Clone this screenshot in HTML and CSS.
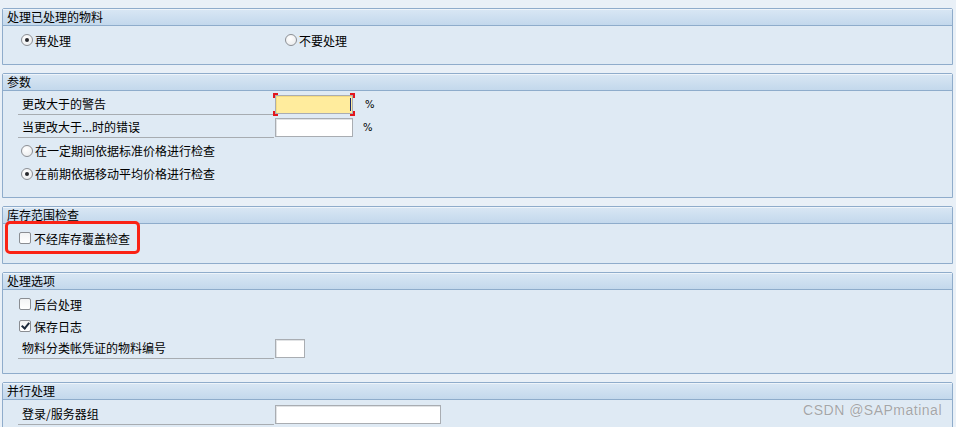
FILE: index.html
```html
<!DOCTYPE html>
<html>
  <head>
    <meta charset="utf-8">
    <title>处理选项</title>
    <link rel="stylesheet" href="styles.css">
  </head>
  <body>
    <div class="group">
      <div class="group_title">处理已处理的物料</div>
      <div class="group_body first">
        <div class="row">
          <label class="choice wide"><span class="radio on"></span>再处理</label>
          <label class="choice"><span class="radio"></span>不要处理</label>
        </div>
      </div>
    </div>

    <div class="group">
      <div class="group_title">参数</div>
      <div class="group_body tall">
        <div class="row">
          <span class="field_label">更改大于的警告</span>
          <span class="focus_mark">
            <span class="input focused"><span class="caret"></span></span>
          </span>
          <span class="unit">%</span>
        </div>
        <div class="row">
          <span class="field_label">当更改大于...时的错误</span>
          <span class="input"></span>
          <span class="unit">%</span>
        </div>
        <div class="row">
          <label class="choice"><span class="radio"></span>在一定期间依据标准价格进行检查</label>
        </div>
        <div class="row">
          <label class="choice"><span class="radio on"></span>在前期依据移动平均价格进行检查</label>
        </div>
      </div>
    </div>

    <div class="group">
      <div class="group_title">库存范围检查</div>
      <div class="group_body">
        <div class="row">
          <label class="choice box"><span class="check"></span>不经库存覆盖检查</label>
        </div>
      </div>
      <div class="highlight"></div>
    </div>

    <div class="group">
      <div class="group_title">处理选项</div>
      <div class="group_body">
        <div class="row">
          <label class="choice box"><span class="check"></span>后台处理</label>
        </div>
        <div class="row">
          <label class="choice box"><span class="check on"></span>保存日志</label>
        </div>
        <div class="row">
          <span class="field_label">物料分类帐凭证的物料编号</span>
          <span class="input short"></span>
        </div>
      </div>
    </div>

    <div class="group">
      <div class="group_title">并行处理</div>
      <div class="group_body">
        <div class="row">
          <span class="field_label">登录/服务器组</span>
          <span class="input long"></span>
        </div>
        <div class="row">
          <span class="field_label blank"></span>
          <span class="input tiny"></span>
        </div>
      </div>
    </div>

    <div class="watermark">CSDN @SAPmatinal</div>
  </body>
</html>
```

FILE: styles.css
```css
html, body {
  height: 100%;
  overflow: hidden;
}

body {
  margin: 0;
  padding: 8px 3px 0 2px;
  background: #e9f0f7;
  font-family: "Noto Sans CJK SC", "DejaVu Sans", sans-serif;
  font-size: 12px;
  color: #000;
  position: relative;
}

.group {
  position: relative;
  border: 1px solid #8faccb;
  border-radius: 2px 2px 0 0;
  background: #dfeaf4;
  margin-bottom: 8px;
}

.group_title {
  height: 16px;
  line-height: 16px;
  padding-left: 4px;
  background: linear-gradient(#d9e7f4, #c3d8ec);
  border-bottom: 1px solid #8eaccb;
  box-shadow: inset 0 1px 0 #eef4fa;
}

.group_body {
  padding: 3px 0 14px 0;
}

.group_body.first {
  padding-bottom: 13px;
}

.group_body.tall {
  padding: 2px 0 12px 0;
}

.tall .row {
  height: 23px;
}

.row {
  display: flex;
  align-items: center;
  height: 22px;
  padding-left: 15px;
}

.choice {
  display: flex;
  align-items: center;
  gap: 2px;
  padding-left: 3px;
}

.choice.wide {
  width: 261px;
}

.choice.box {
  padding-left: 1px;
  gap: 3px;
}

.radio {
  width: 10px;
  height: 10px;
  border: 1px solid #8c8f94;
  border-radius: 50%;
  background: radial-gradient(circle at 40% 35%, #ffffff, #e6e8ea);
  position: relative;
}

.radio.on::after {
  content: "";
  position: absolute;
  left: 3px;
  top: 3px;
  width: 4px;
  height: 4px;
  border-radius: 50%;
  background: #26282c;
}

.check {
  width: 10px;
  height: 10px;
  border: 1px solid #8a8d92;
  border-radius: 2px;
  background: linear-gradient(#f2f3f4, #ffffff);
  position: relative;
}

.check.on::after {
  content: "";
  position: absolute;
  left: 3px;
  top: 0px;
  width: 3px;
  height: 6px;
  border: solid #1c2a3c;
  border-width: 0 2px 2px 0;
  transform: rotate(40deg);
}

.field_label {
  width: 252px;
  height: 21px;
  line-height: 22px;
  padding-left: 4px;
  border-bottom: 1px solid #a7acb1;
  flex: none;
  align-self: flex-start;
}

.field_label.blank {
  border-bottom-color: transparent;
}

.input {
  display: block;
  width: 76px;
  height: 17px;
  border: 1px solid #a9adb2;
  box-shadow: inset 1px 1px 0 #e1e3e5;
  background: #fff;
  flex: none;
  position: relative;
  margin-left: 1px;
}

.input.short {
  width: 28px;
}

.input.long {
  width: 164px;
}

.input.tiny {
  width: 20px;
  border-top-color: #6f7378;
  background: #d0d3d6;
}

.input.focused {
  background: #ffec9d;
  box-shadow: inset 1px 1px 0 #f6dc80;
  margin-left: 0;
}

.caret {
  position: absolute;
  right: 1px;
  top: 2px;
  width: 1px;
  height: 13px;
  background: #1a2a6c;
}

.focus_mark {
  margin-left: -1px;
  padding: 2px;
  background:
    linear-gradient(#e3161c, #e3161c) left top / 5px 2px no-repeat,
    linear-gradient(#e3161c, #e3161c) left top / 2px 5px no-repeat,
    linear-gradient(#e3161c, #e3161c) right top / 5px 2px no-repeat,
    linear-gradient(#e3161c, #e3161c) right top / 2px 5px no-repeat,
    linear-gradient(#e3161c, #e3161c) left bottom / 5px 2px no-repeat,
    linear-gradient(#e3161c, #e3161c) left bottom / 2px 5px no-repeat,
    linear-gradient(#e3161c, #e3161c) right bottom / 5px 2px no-repeat,
    linear-gradient(#e3161c, #e3161c) right bottom / 2px 5px no-repeat;
}

.unit {
  margin-left: 10px;
  font-family: "DejaVu Sans", sans-serif;
  font-size: 10px;
}

.highlight {
  position: absolute;
  left: 2px;
  top: 14px;
  width: 129px;
  height: 27px;
  border: 3px solid #fa2214;
  border-radius: 5px;
}

.watermark {
  position: absolute;
  right: 14px;
  top: 402px;
  font-family: "Liberation Sans", sans-serif;
  font-size: 14px;
  color: #a3a6a9;
  text-shadow: 0 0 1px #fff;
  letter-spacing: 0.5px;
}
```
